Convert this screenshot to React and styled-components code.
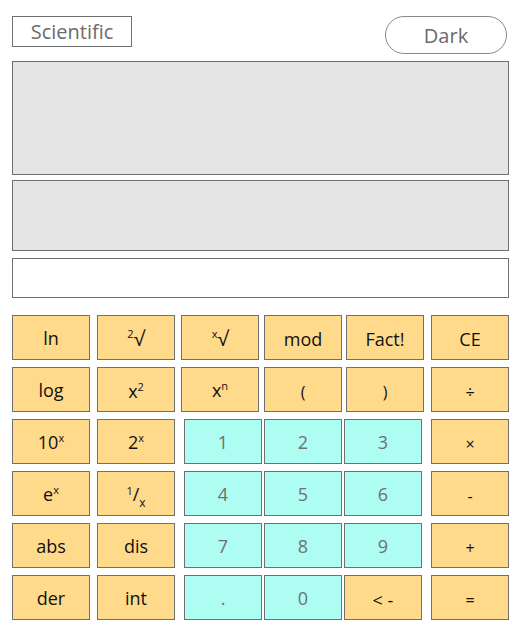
import React from 'react';
import styled, { createGlobalStyle } from 'styled-components';

const GlobalStyle = createGlobalStyle`
    body {
        margin: 0;
        background: #ffffff;
        font-family: "Open Sans", "Noto Sans", sans-serif;
    }
`;

const Page = styled.div`
    width: 521px;
    height: 639px;
    box-sizing: border-box;
    padding: 16px 12px 0 12px;
    display: flex;
    flex-direction: column;
`;

const Header = styled.div`
    display: flex;
    justify-content: space-between;
    align-items: flex-start;
    height: 38px;
    margin-bottom: 7px;
`;

const ModeBox = styled.div`
    width: 120px;
    height: 31px;
    box-sizing: border-box;
    border: 1px solid #707070;
    color: #6b6b6b;
    font-size: 20px;
    display: flex;
    align-items: center;
    justify-content: center;
    padding-bottom: 1px;
`;

const ThemeButton = styled.button`
    width: 122px;
    height: 38px;
    margin-right: 2px;
    box-sizing: border-box;
    border: 1px solid #8a8a8a;
    border-radius: 19px;
    background: #ffffff;
    color: #6b6b6b;
    font-family: inherit;
    font-size: 20px;
    padding: 0;
`;

const Screen = styled.div`
    height: ${(p) => p.$height}px;
    margin-bottom: ${(p) => p.$after}px;
    box-sizing: border-box;
    border: 1px solid #707070;
    background: ${(p) => (p.$blank ? '#ffffff' : '#e5e5e5')};
`;

const Keypad = styled.div`
    display: grid;
    grid-template-columns: 85px 84px 83px 80px 87px 78px;
    grid-auto-rows: 45px;
    row-gap: 7px;
`;

const Key = styled.button`
    width: 78px;
    height: 45px;
    margin-left: ${(p) => p.$shift || 0}px;
    box-sizing: border-box;
    border: 1px solid #707070;
    background: ${(p) => (p.$digit ? '#adfdf3' : '#ffda8b')};
    color: ${(p) => (p.$digit ? '#707070' : '#111111')};
    font-family: inherit;
    font-size: ${(p) => (p.$small ? 16 : 18)}px;
    padding: ${(p) => (p.$small ? 5 : p.$low ? 3 : 0)}px 0 0 0;
    display: flex;
    align-items: center;
    justify-content: center;
`;

const Label = styled.span`
    line-height: 1;
    white-space: pre;
`;

const Sup = styled.sup`
    font-size: 11px;
    vertical-align: ${(p) => p.$lift || 7}px;
    line-height: 0;
`;

const Sub = styled.sub`
    font-size: 12px;
    vertical-align: -6px;
    line-height: 0;
`;

const Root = styled.span`
    font-size: 20px;
    vertical-align: -3px;
`;

const Arrow = styled.span`
    font-size: 18px;
`;

const keys = [
    { label: 'ln' },
    { label: <><Sup $lift={5}>2</Sup><Root>√</Root></> },
    { label: <><Sup $lift={5}>x</Sup><Root>√</Root></> },
    { label: 'mod', low: true },
    { label: 'Fact!', low: true, shift: 2 },
    { label: 'CE', low: true },

    { label: 'log' },
    { label: <>x<Sup>2</Sup></>, low: true },
    { label: <>x<Sup>n</Sup></> },
    { label: '(', small: true },
    { label: ')', small: true, shift: 2 },
    { label: '÷', small: true },

    { label: <>10<Sup>x</Sup></> },
    { label: <>2<Sup>x</Sup></> },
    { label: '1', digit: true, shift: 3 },
    { label: '2', digit: true },
    { label: '3', digit: true },
    { label: '×', small: true },

    { label: <>e<Sup>x</Sup></> },
    { label: <><Sup $lift={6}>1</Sup>/<Sub>x</Sub></> },
    { label: '4', digit: true, shift: 3 },
    { label: '5', digit: true },
    { label: '6', digit: true },
    { label: '-', small: true },

    { label: 'abs' },
    { label: 'dis' },
    { label: '7', digit: true, shift: 3 },
    { label: '8', digit: true },
    { label: '9', digit: true },
    { label: '+', small: true },

    { label: 'der' },
    { label: 'int' },
    { label: '.', digit: true, shift: 3 },
    { label: '0', digit: true },
    { label: <Arrow>{'< -'}</Arrow>, small: true },
    { label: '=', small: true },
];

export default function App() {
    return (
        <Page>
            <GlobalStyle />
            <Header>
                <ModeBox>Scientific</ModeBox>
                <ThemeButton>Dark</ThemeButton>
            </Header>
            <Screen $height={114} $after={5} />
            <Screen $height={71} $after={7} />
            <Screen $height={40} $after={17} $blank />
            <Keypad>
                {keys.map((k, i) => (
                    <Key key={i} $digit={k.digit} $small={k.small} $low={k.low} $shift={k.shift}>
                        <Label>{k.label}</Label>
                    </Key>
                ))}
            </Keypad>
        </Page>
    );
}
